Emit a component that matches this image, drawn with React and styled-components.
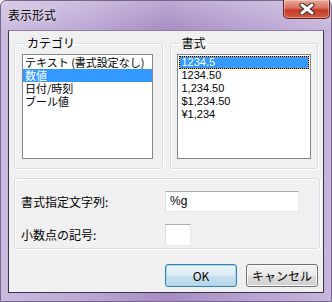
import React from 'react';
import styled, { createGlobalStyle } from 'styled-components';

const GlobalStyle = createGlobalStyle`
  html, body { margin: 0; padding: 0; background: #ffffff; }
  body { font-family: "Noto Sans CJK JP", "DejaVu Sans", sans-serif; font-size: 12px; }
  * { box-sizing: border-box; }
`;

const categories = ['テキスト (書式設定なし)', '数値', '日付/時刻', 'ブール値'];
const formats = ['1234.5', '1234.50', '1,234.50', '$1,234.50', '¥1,234'];

const Window = styled.div`
  width: 332px;
  height: 302px;
  display: flex;
  flex-direction: column;
  padding: 0 7px 8px 7px;
  border-radius: 6px 6px 0 0;
  border: 1px solid #76668e;
  background:
    linear-gradient(to bottom, rgba(255,255,255,0.25), rgba(255,255,255,0) 30px),
    linear-gradient(to right, #cbbadf 0%, #bca8d4 25%, #a78cc3 50%, #b7a2d1 75%, #c7b5db 100%);
`;

const TitleBar = styled.div`
  height: 29px;
  display: flex;
  align-items: flex-start;
  justify-content: space-between;
  margin-right: -6px;
`;

const Title = styled.div`
  padding-top: 6px;
  color: #000;
  font-size: 12px;
  line-height: 15px;
  text-shadow: 0 0 6px rgba(255,255,255,0.9);
`;

const CloseButton = styled.div`
  width: 47px;
  height: 19px;
  margin-top: -1px;
  display: flex;
  align-items: center;
  justify-content: center;
  border: 1px solid #5e2520;
  border-top: none;
  border-radius: 0 0 5px 5px;
  background: linear-gradient(to bottom, #e9a99a 0%, #d8705d 45%, #c43b29 55%, #d15a3f 100%);
  box-shadow: inset 0 0 0 1px rgba(255,255,255,0.35);
`;

const Client = styled.div`
  flex: 1;
  display: flex;
  flex-direction: column;
  background: #f0f0f0;
  border: 1px solid #3a3448;
  border-top-color: #8c7ea0;
  padding: 0 5px 0 5px;
`;

const TopRow = styled.div`
  display: flex;
  gap: 7px;
  margin-top: 5px;
`;

const Group = styled.fieldset`
  margin: 0;
  width: 150px;
  height: 133px;
  padding: 4px 0 0 ${p => p.$padLeft}px;
  border: 1px solid #d5dfe5;
  border-radius: 3px;
  box-shadow: inset 1px 1px 0 #fff, 1px 1px 0 #fff;
`;

const Legend = styled.legend`
  padding: 0 2px;
  margin-left: 3px;
  font-size: 12px;
  line-height: 14px;
  color: #000;
`;

const List = styled.div`
  width: ${p => p.$width}px;
  height: 105px;
  background: #fff;
  border: 1px solid #828790;
  padding: 1px ${p => p.$padX}px;
  font-family: ${p => p.$font};
`;

const Item = styled.div`
  height: 13px;
  line-height: 13px;
  padding-left: ${p => p.$textX}px;
  font-size: 11px;
  white-space: nowrap;
  color: ${p => (p.$selected ? '#fff' : '#000')};
  background: ${p => (p.$selected ? '#3399ff' : 'transparent')};
  ${p => p.$focus && `
    box-shadow: inset 0 0 0 1px #f0b050;
    outline: 1px dotted #000;
    outline-offset: -1px;
  `}
`;

const SettingsGroup = styled.div`
  margin-top: 9px;
  width: 306px;
  height: 71px;
  border: 1px solid #d5dfe5;
  border-radius: 3px;
  box-shadow: inset 1px 1px 0 #fff, 1px 1px 0 #fff;
  padding: 10px 0 0 6px;
  display: grid;
  grid-template-columns: 144px auto;
  row-gap: 7px;
  align-items: center;
`;

const Label = styled.div`
  font-size: 12px;
  line-height: 14px;
`;

const TextBox = styled.div`
  width: ${p => p.$width}px;
  height: ${p => p.$height}px;
  background: #fff;
  border: 1px solid #e3e9ef;
  border-top-color: #abadb3;
  border-left-color: #dbdfe6;
  padding-left: 4px;
  font-size: 12px;
  line-height: 19px;
  font-family: "Liberation Sans", sans-serif;
`;

const ButtonRow = styled.div`
  display: flex;
  justify-content: flex-end;
  gap: 9px;
  margin-top: 15px;
`;

const Button = styled.div`
  width: 72px;
  height: 23px;
  display: flex;
  align-items: center;
  justify-content: center;
  font-size: 12px;
  border-radius: 3px;
  border: 1px solid ${p => (p.$default ? '#3c7fb1' : '#707070')};
  background: ${p => (p.$default
    ? 'linear-gradient(to bottom, #eaf4fa 0%, #dcebf5 50%, #c6dfee 51%, #b9d6e8 100%)'
    : 'linear-gradient(to bottom, #f2f2f2 0%, #ebebeb 50%, #dddddd 51%, #cfcfcf 100%)')};
  box-shadow: inset 0 0 0 1px ${p => (p.$default ? '#9fd9f4' : '#fcfcfc')};
`;

const CloseIcon = () => (
  <svg width="16" height="12" viewBox="0 0 16 12">
    <path d="M3 2 L13 10 M13 2 L3 10" stroke="#3a2420" strokeWidth="5" strokeLinecap="round" />
    <path d="M3 2 L13 10 M13 2 L3 10" stroke="#ffffff" strokeWidth="3" strokeLinecap="round" />
  </svg>
);

export default function App() {
  return (
    <>
      <GlobalStyle />
      <Window>
        <TitleBar>
          <Title>表示形式</Title>
          <CloseButton><CloseIcon /></CloseButton>
        </TitleBar>
        <Client>
          <TopRow>
            <Group $padLeft={7}>
              <Legend>カテゴリ</Legend>
              <List $width={131} $padX={0} $font={'"Noto Sans CJK JP", sans-serif'}>
                {categories.map((c, i) => (
                  <Item key={c} $textX={2} $selected={i === 1}>{c}</Item>
                ))}
              </List>
            </Group>
            <Group $padLeft={6}>
              <Legend>書式</Legend>
              <List $width={134} $padX={1} $font={'"Liberation Sans", "Noto Sans CJK JP", sans-serif'}>
                {formats.map((f, i) => (
                  <Item key={f} $textX={3} $selected={i === 0} $focus={i === 0}>{f}</Item>
                ))}
              </List>
            </Group>
          </TopRow>
          <SettingsGroup>
            <Label>書式指定文字列:</Label>
            <TextBox $width={134} $height={21}>%g</TextBox>
            <Label>小数点の記号:</Label>
            <TextBox $width={26} $height={22} />
          </SettingsGroup>
          <ButtonRow>
            <Button $default>OK</Button>
            <Button>キャンセル</Button>
          </ButtonRow>
        </Client>
      </Window>
    </>
  );
}
